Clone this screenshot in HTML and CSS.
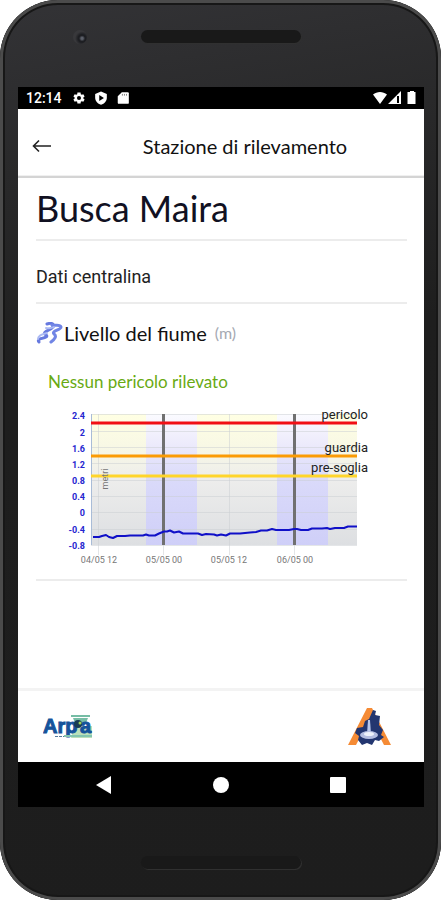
FILE: index.html
```html
<!DOCTYPE html>
<html lang="it">
<head>
<meta charset="utf-8">
<meta name="viewport" content="width=device-width, initial-scale=1">
<title>Stazione di rilevamento</title>
<link rel="stylesheet" href="styles.css">
</head>
<body>
<div class="phone">
  <div class="bezel bezel-top">
    <span class="camera"></span>
    <span class="speaker"></span>
  </div>
  <div class="screen">
    <div class="status">
      <span class="clock">12:14</span>
      <svg class="status-icon" viewBox="0 0 24 24" aria-hidden="true"><path fill="#fff" d="M19.400 13a7.500 7.500 0 0 0 0-2l2.200-1.700-2.200-3.800-2.600 1a8 8 0 0 0-1.700-1L14.700 2.500H9.300l-.4 3a8 8 0 0 0-1.700 1l-2.600-1-2.200 3.800L4.600 11a7.500 7.500 0 0 0 0 2l-2.200 1.700 2.200 3.800 2.600-1a8 8 0 0 0 1.700 1l.4 3h5.400l.4-3a8 8 0 0 0 1.700-1l2.600 1 2.200-3.800z"/><circle cx="12" cy="12" r="3.500" fill="#000"/></svg>
      <svg class="status-icon" viewBox="0 0 24 24" aria-hidden="true"><path fill="#fff" d="M12 1L2 5v6c0 6 4 10.500 10 12.500C18 21.500 22 17 22 11V5z"/><path d="M9 7l8 5-8 5z"/></svg>
      <svg class="status-icon" viewBox="0 0 24 24" aria-hidden="true"><path fill="#fff" d="M10 2h10a2 2 0 0 1 2 2v16a2 2 0 0 1-2 2H5a2 2 0 0 1-2-2V9z"/><path stroke="#777" stroke-width="1.500" d="M11 5v3M14.500 5v3M18 5v3"/></svg>
      <svg class="signals" viewBox="0 0 44 14" aria-hidden="true"><path fill="#fff" d="M0 3.500C4 0 10 0 14 3.500L7 13zM28 0v13H15z"/><path stroke="#000" stroke-width="2" d="M25 5v7"/><path fill="#fff" d="M37 0h4v1h1.500v12h-8V1H37z"/></svg>
    </div>
    <header class="appbar">
      <button class="back" type="button" aria-label="Indietro"><svg viewBox="0 0 20 14" aria-hidden="true"><path d="M19 7H2M7 1.500L1.500 7 7 12.500" fill="none" stroke="#222" stroke-width="1.600"/></svg></button>
      <h1>Stazione di rilevamento</h1>
    </header>
    <main class="content">
      <h2 class="station">Busca Maira</h2>
      <p class="section">Dati centralina</p>
      <section class="river">
        <h3><svg class="river-icon" viewBox="0 0 28 22" aria-hidden="true"><g fill="none" stroke-linecap="round"><path stroke="#6679df" stroke-width="3" d="M11 2c6-2 8 1 5 4-2 2-11 4-6 7 3 2-3 3-6 4-2 1-2 2-1 3"/><path stroke="#7185e5" stroke-width="3" d="M16 3c4 1 8-1 9 2 0 3-10 4-7 7 3 2 1 5-3 8"/><path stroke="#acbaf3" stroke-width="2" d="M10 6c3 1 5 0 8-1M11 11c-5 1-9 3-9 6"/></g></svg>Livello del fiume <small>(m)</small></h3>
        <p class="alert">Nessun pericolo rilevato</p>
        <svg class="chart" viewBox="36 402 371 166" role="img" aria-label="Livello del fiume in metri">
          <defs><linearGradient id="day" x2="0" y2="1"><stop stop-color="#ffffe3"/><stop offset=".25" stop-color="#f8f8e5"/><stop offset=".5" stop-color="#ededec"/><stop offset="1" stop-color="#dddfe2"/></linearGradient><linearGradient id="night" x2="0" y2="1"><stop stop-color="#fbfbff"/><stop offset=".25" stop-color="#ebe9fb"/><stop offset=".5" stop-color="#dadafa"/><stop offset="1" stop-color="#cfcff8"/></linearGradient></defs>
          <path fill="url(#day)" d="M91 414h266v131H91z"/>
          <path fill="url(#night)" d="M146 414h51v131h-51zM277 414h51v131h-51z"/>
          <path class="grid" d="M91 414.500h266M91 431.500h266M91 447.500h266M91 463.500h266M91 480.500h266M91 496.500h266M91 512.500h266M91 529.500h266M91 545.500h266M98.500 414v141M163.500 545v10M229.500 414v141M294.500 545v10"/>
          <path stroke="#a9bcd7" d="M91.500 414v131"/>
          <path stroke="#707070" stroke-width="3" d="M163.500 414v131M294.500 414v131"/>
          <path stroke="#f10f14" stroke-width="3" d="M91 423h266"/>
          <path stroke="#fb9b05" stroke-width="3" d="M91 456h266"/>
          <path stroke="#ffd52b" stroke-width="3" d="M91 476h266"/>
          <path fill="none" stroke="#1010c8" stroke-width="2" stroke-linejoin="round" d="M93 537h6l3-1 4-1 3 2 4 1 4-2h8l5-.5h13l3-1 3 1h6l4-2 5-2h3l3-1 4 2 5-1 4 2h15l4 1.500 4-1 8 .5 3 1 4-1 5 1 4-2h10l10-1 6-.500 5-1.500h6l5-1.500 4 1h13l5-1h3l4 1h7l4-1.500h10l5-.5 3 1 5-1h9l4-1.500h9"/>
          <g class="y-label"><text x="85" y="419">2.4</text><text x="85" y="436">2</text><text x="85" y="452">1.6</text><text x="85" y="468">1.2</text><text x="85" y="484">0.8</text><text x="85" y="500">0.4</text><text x="85" y="516">0</text><text x="85" y="533">-0.4</text><text x="85" y="549">-0.8</text></g>
          <g class="x-label"><text x="99" y="563">04/05 12</text><text x="164" y="563">05/05 00</text><text x="229" y="563">05/05 12</text><text x="295" y="563">06/05 00</text><text transform="translate(108 479) rotate(-90)">metri</text></g>
          <g class="limit"><text x="368" y="419">pericolo</text><text x="368" y="452">guardia</text><text x="368" y="472">pre-soglia</text></g>
        </svg>
      </section>
    </main>
    <footer class="brands">
      <svg class="arpa" viewBox="0 0 52 28" role="img" aria-label="Arpa"><path fill="#76bda5" d="M28 2h19v2H28zM30 5h15l-2 5H32z"/><path fill="#bbdfb9" d="M31 13h18v12H28z"/><text x="0" y="20">Arp</text><text x="37" y="20">a</text><circle cx="35" cy="11" r="4" fill="#183c54"/><circle cx="37" cy="10" r="1.500" fill="#9bd359"/><path stroke="#83c5b0" stroke-width="2" d="M21 23h28"/><path stroke="#57799b" d="M12 23.500h9" stroke-dasharray="3 1"/></svg>
      <svg class="alpi" viewBox="0 0 44 40" role="img" aria-label="Piemonte"><path fill="#f58b35" d="M19 1h5l19 37h-7L22 11 8 38H0z"/><path fill="#233670" d="M25 3l3 1-1 4 5 1-1 9 4 5-2 5 3 2-5 4-4-1-3 5-5-2-5 2-4-5 1-4-4-3 2-5 6-1 2-6 4-2z"/><path fill="#b9c8ec" d="M20 13h2l1 14h-4z"/><ellipse cx="21" cy="28" rx="9" ry="4" fill="#b5bee1"/><ellipse cx="21" cy="27" rx="5" ry="2" fill="#eef2fb"/></svg>
    </footer>
    <nav class="navbar" aria-label="Navigazione">
      <button type="button" aria-label="Indietro"><svg viewBox="0 0 18 18"><path fill="#fff" d="M16 0v18L1 9z"/></svg></button>
      <button type="button" aria-label="Home"><svg viewBox="0 0 18 18"><circle cx="9" cy="9" r="8" fill="#fff"/></svg></button>
      <button type="button" aria-label="Recenti"><svg viewBox="0 0 18 18"><rect x="1" y="1" width="16" height="16" rx="1" fill="#fff"/></svg></button>
    </nav>
  </div>
  <div class="bezel bezel-bottom"><span class="speaker"></span></div>
</div>
</body>
</html>
```
FILE: styles.css
```css
* { box-sizing: border-box; }
body { margin: 0; background: #fff; font-family: Lato, sans-serif; color: #111; }
h1, h2, h3, p { margin: 0; font-weight: 400; }
button { border: 0; padding: 0; background: none; display: flex; }
svg { display: block; }
.phone {
  min-height: 100vh;
  display: flex;
  flex-direction: column;
  padding: 0 17px 0 18px;
  border-radius: 58px;
  background: linear-gradient(170deg, #333336, #29292a 18%, #1e1e1e 40%, #1d1d1d);
  box-shadow: inset 0 0 0 3px #4b4b4b, inset 0 0 0 5px #171717;
}
.bezel { display: grid; grid-template-columns: 1fr 160px 1fr; }
.bezel-top { height: 87px; padding-top: 30px; }
.bezel-bottom { height: 93px; padding-top: 49px; }
.speaker { grid-column: 2; height: 13px; border-radius: 7px; background: #191919; box-shadow: 1px 1px 0 #303030; }
.camera { grid-column: 1; grid-row: 1; justify-self: center; width: 14px; height: 14px; border-radius: 50%; background: radial-gradient(circle at 65% 60%, #5b5f69 0 1px, #1d1e22 3px 4px, #38383b 7px); }
.screen { flex: 1; display: flex; flex-direction: column; background: #fff; }
.status { height: 22px; background: #000; color: #fff; display: flex; align-items: center; gap: 8px; padding: 0 7px 0 8px; }
.clock { font: 500 14px Roboto, sans-serif; margin-right: 2px; }
.status-icon { width: 14px; height: 14px; }
.signals { width: 44px; height: 14px; margin-left: auto; }
.appbar { height: 69px; display: grid; grid-template-columns: 48px 1fr; align-items: center; padding: 6px 0 0; border-bottom: 2px solid #d4d4d4; box-shadow: inset 0 -1px 0 #f0f0f0; }
.back { justify-content: center; }
.back svg { width: 20px; height: 14px; }
h1 { font-size: 20px; text-align: center; }
.content { flex: 1; padding: 0 17px 0 18px; }
.station { height: 63px; font-size: 36px; line-height: 60px; color: #111122; border-bottom: 2px solid #ececec; }
.section { height: 63px; padding-top: 9px; font: 18px/54px Roboto, sans-serif; color: #222; border-bottom: 2px solid #ececec; }
.river { padding-top: 16px; border-bottom: 2px solid #ececec; padding-bottom: 11px; }
h3 { display: flex; align-items: center; font-size: 20px; line-height: 26px; }
h3 small { margin-left: 8px; font-size: 16px; color: #a5a9b2; }
.river-icon { width: 28px; height: 22px; }
.alert { padding: 24px 12px 0; font-size: 17px; line-height: 24px; color: #68aa12; }
.chart { width: 100%; margin-top: 8px; }
.grid { fill: none; stroke: #c9cdd2; stroke-opacity: .5; }
.y-label { font: 700 9px Roboto, sans-serif; fill: #2525cf; text-anchor: end; }
.x-label { font: 9px Roboto, sans-serif; fill: #777; text-anchor: middle; }
.limit { font: 13px Roboto, sans-serif; fill: #222; text-anchor: end; }
.brands { height: 74px; display: flex; align-items: center; justify-content: space-between; padding: 0 32px 0 25px; border-top: 3px solid #f3f3f3; }
.arpa { width: 52px; height: 28px; }
.arpa text { font: 700 20px "Liberation Sans", sans-serif; fill: #15539b; stroke: #15539b; }
.alpi { width: 44px; height: 40px; }
.navbar { height: 45px; background: #000; display: flex; justify-content: space-between; align-items: center; padding: 0 77px; }
.navbar svg { width: 18px; height: 18px; }
```
